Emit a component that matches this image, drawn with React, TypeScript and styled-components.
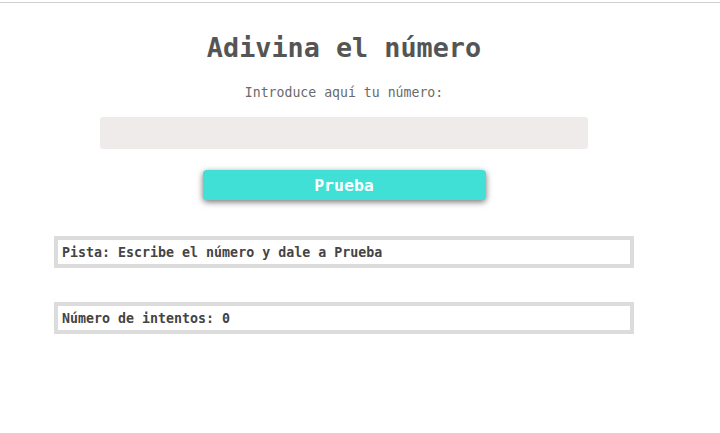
import { useState } from "react";
import styled, { createGlobalStyle } from "styled-components";

const Global = createGlobalStyle`
  body {
    margin: 0;
    background: #fff;
    font-family: "DejaVu Sans Mono", "Liberation Mono", monospace;
  }
`;

const TopRule = styled.div`
  height: 1px;
  margin-top: 2px;
  background: #cfcfcf;
`;

const Page = styled.main`
  width: 672px;
  margin-left: 8px;
  display: flex;
  flex-direction: column;
  align-items: center;
`;

const Title = styled.h1`
  margin: 29px 0 0;
  font-size: 26.8px;
  line-height: 32px;
  font-weight: bold;
  color: #555;
`;

const Label = styled.label`
  margin-top: 20px;
  font-size: 13.2px;
  line-height: 17px;
  color: #6a6a6a;
`;

const NumberInput = styled.input`
  box-sizing: border-box;
  margin-top: 16px;
  width: 488px;
  height: 32px;
  border: none;
  border-radius: 3px;
  background: #efebea;
  outline: none;
`;

const TryButton = styled.button`
  margin-top: 21px;
  width: 283px;
  height: 30px;
  border: none;
  border-radius: 4px;
  background: #40e0d6;
  color: #fff;
  font-family: inherit;
  font-size: 16.5px;
  font-weight: bold;
  box-shadow: 0 2px 6px rgba(0, 0, 0, 0.55);
  cursor: pointer;
`;

const InfoBox = styled.div<{ $gap: number }>`
  box-sizing: border-box;
  margin-top: ${(p) => p.$gap}px;
  width: 580px;
  height: 32px;
  padding: 0 4px;
  border: 4px solid #dcdcdc;
  display: flex;
  align-items: center;
  font-size: 13.3px;
  font-weight: bold;
  color: #444;
`;

export default function App() {
  const [value, setValue] = useState("");
  const [tries, setTries] = useState(0);
  const [hint, setHint] = useState("Escribe el número y dale a Prueba");

  const guess = () => {
    if (!value) return;
    setTries((t) => t + 1);
    setHint(`Has probado ${value}`);
  };

  return (
    <>
      <Global />
      <TopRule />
      <Page>
        <Title>Adivina el número</Title>
        <Label htmlFor="num">Introduce aquí tu número:</Label>
        <NumberInput id="num" type="number" value={value} onChange={(e) => setValue(e.target.value)} />
        <TryButton onClick={guess}>Prueba</TryButton>
        <InfoBox $gap={36}>Pista: {hint}</InfoBox>
        <InfoBox $gap={34}>Número de intentos: {tries}</InfoBox>
      </Page>
    </>
  );
}
